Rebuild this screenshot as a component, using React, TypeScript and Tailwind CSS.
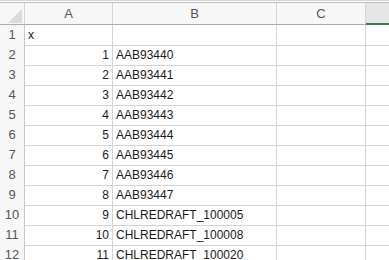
const rows: [string, string][] = [
  ["x", ""],
  ["1", "AAB93440"],
  ["2", "AAB93441"],
  ["3", "AAB93442"],
  ["4", "AAB93443"],
  ["5", "AAB93444"],
  ["6", "AAB93445"],
  ["7", "AAB93446"],
  ["8", "AAB93447"],
  ["9", "CHLREDRAFT_100005"],
  ["10", "CHLREDRAFT_100008"],
  ["11", "CHLREDRAFT_100020"],
]

const cols = "grid grid-cols-[25px_88px_164px_89px_1fr]"

export default function App() {
  return (
    <div className="w-[389px] h-[260px] overflow-hidden bg-white font-['Liberation_Sans',Arial,sans-serif] text-[12px]">
      {/* top double line */}
      <div className="h-[3px] border-t border-b border-t-[#d6d6d6] border-b-[#bdbdbd]" />

      {/* column headers */}
      <div className={`${cols} h-[22px] bg-[#f7f7f7] border-b border-[#ababab] text-[#555] text-[13px]`}>
        <div className="relative border-r border-[#d4d4d4]">
          <svg className="absolute left-[8px] top-[6px]" width="14" height="14" viewBox="0 0 14 14">
            <polygon points="14,0 14,14 0,14" fill="#dadada" />
          </svg>
        </div>
        <div className="flex items-center justify-center border-r border-[#d4d4d4]">A</div>
        <div className="flex items-center justify-center border-r border-[#d4d4d4]">B</div>
        <div className="flex items-center justify-center border-r border-[#d4d4d4]">C</div>
        <div className="bg-[#e6e6e6] -mb-px border-b-2 border-[#3d7a4c]" />
      </div>

      {rows.map(([a, b], i) => (
        <div key={i} className={`${cols} h-[20px]`}>
          <div className="flex items-center justify-center bg-[#f7f7f7] border-r border-b border-[#c8c8c8] text-[#555] text-[13px]">
            {i + 1}
          </div>
          <div
            className={`flex items-center border-r border-b border-[#d4d4d4] text-[#1a1a1a] ${
              i === 0 ? "justify-start pl-[3px]" : "justify-end pr-[3px]"
            }`}
          >
            {a}
          </div>
          <div className="flex items-center pl-[3px] border-r border-b border-[#d4d4d4] text-[#1a1a1a] whitespace-nowrap">
            {b}
          </div>
          <div className="border-r border-b border-[#d4d4d4]" />
          <div className="border-b border-[#d4d4d4]" />
        </div>
      ))}
    </div>
  )
}
